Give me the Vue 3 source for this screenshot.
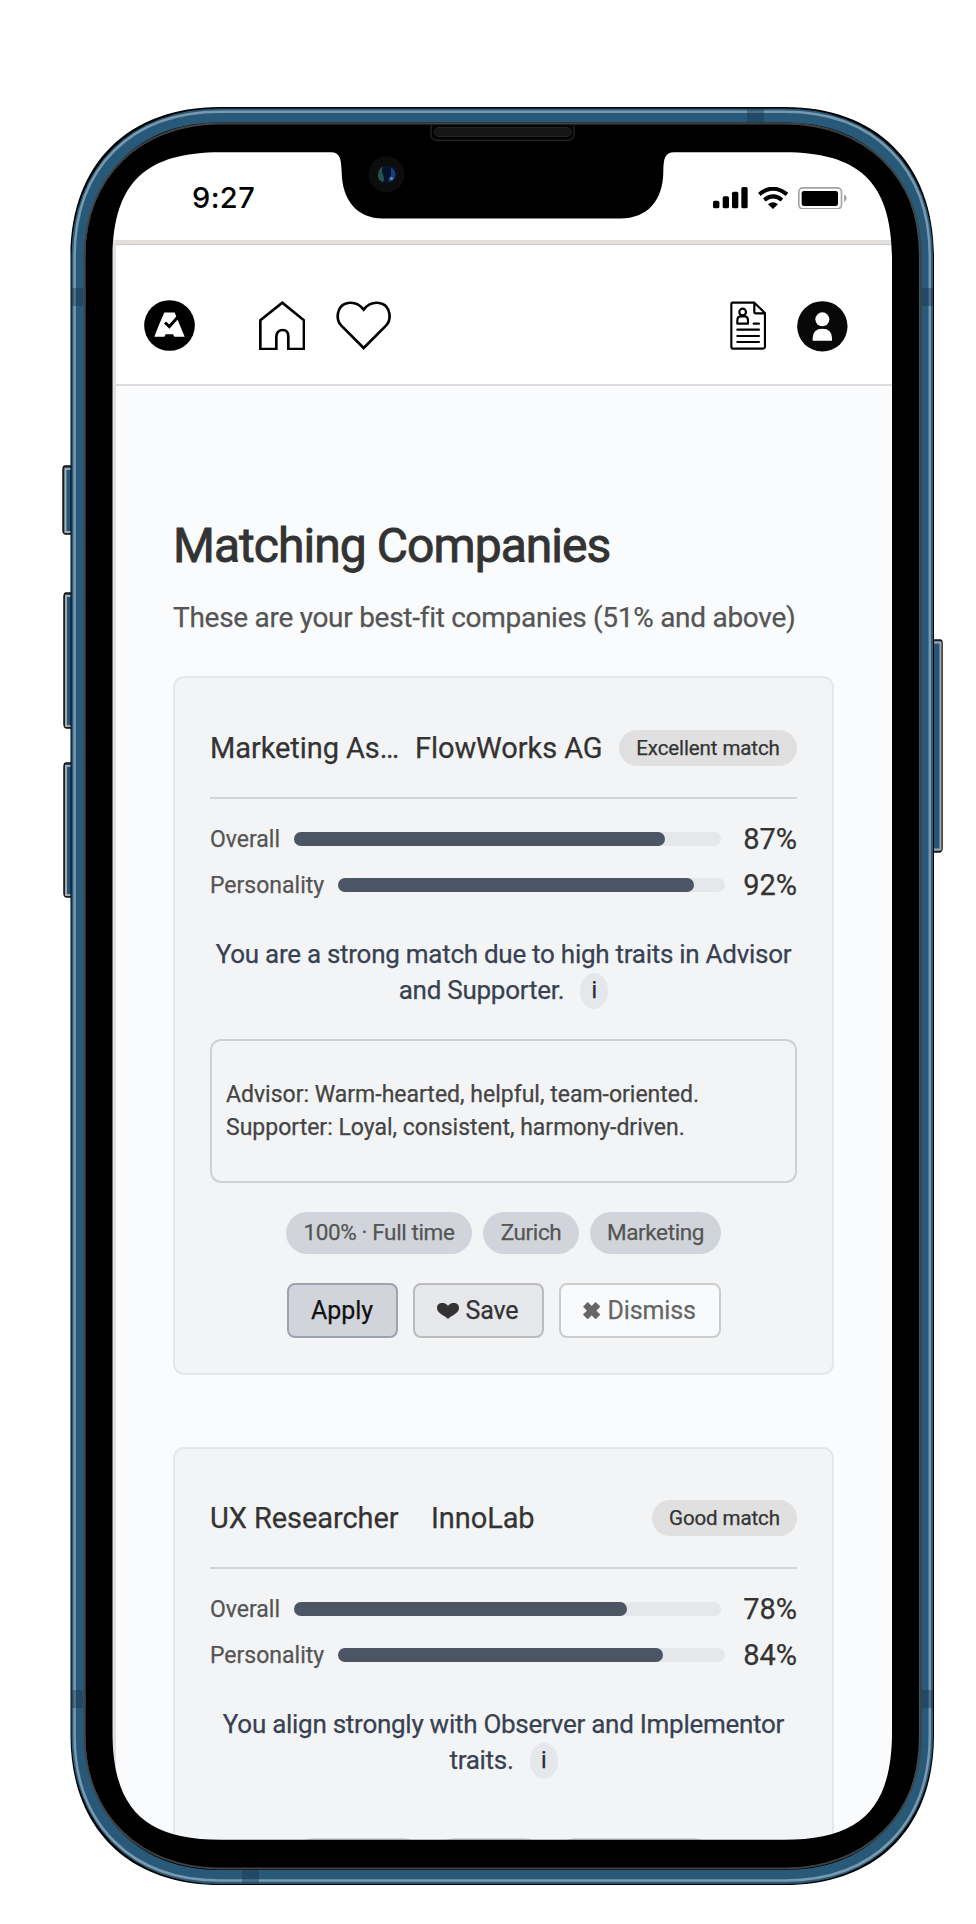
<script setup>
const matches = [
  {
    title: 'Marketing As…', company: 'FlowWorks AG', badge: 'Excellent match', kind: 'first',
    overall: 87, personality: 92,
    lines: ['You are a strong match due to high traits in Advisor', 'and Supporter.'],
    traits: [['Advisor:', 'Warm-hearted, helpful, team-oriented.'], ['Supporter:', 'Loyal, consistent, harmony-driven.']],
    tags: ['100% · Full time', 'Zurich', 'Marketing'],
  },
  {
    title: 'UX Researcher', company: 'InnoLab', badge: 'Good match', kind: 'second',
    overall: 78, personality: 84,
    lines: ['You align strongly with Observer and Implementor', 'traits.'],
    traits: [],
    tags: ['', '', ''],
  },
]
</script>

<template>
  <div class="stage">
    <main class="screen">
      <div class="status">
        <span class="time">9:27</span>
        <div class="signals">
          <svg class="cell" viewBox="642 293 104 64"><rect x="642" y="334" width="19" height="23" rx="5"/><rect x="671" y="321" width="19" height="36" rx="5"/><rect x="699" y="307" width="19" height="50" rx="5"/><rect x="727" y="293" width="19" height="64" rx="5"/></svg>
          <svg class="wifi" viewBox="776 291 91 66"><g fill="none" stroke="#000" stroke-width="12"><path d="M780 313Q821 279 863 313"/><path d="M795 330Q821 308 848 330"/></g><path d="M806 343Q821 331 836 343L821 357Z"/></svg>
          <svg class="battery" viewBox="897 291 147 68"><rect x="899.5" y="293.500" width="128" height="63" rx="12" fill="none" stroke="#a4a4a4" stroke-width="5"/><rect x="908" y="303" width="109" height="45" rx="7"/><path d="M1035 313Q1043 318 1043 325T1035 337Z" fill="#a4a4a4"/></svg>
        </div>
      </div>
      <div class="app">
        <header class="nav">
          <svg class="logo" viewBox="282 630 153 152"><circle cx="358.500" cy="706" r="76"/><path fill="#fff" d="M343 667H374L379 680L404 740H373L369 732H347L343 740H313L327 704Z"/><path d="M345 697L358 709L383 681" fill="none" stroke="#000" stroke-width="9"/></svg>
          <svg class="home" viewBox="627 634 139 148"><path d="M631 692L697 639L762 692V778H715V740Q715 721 698 721T679 740V778H631Z" fill="none" stroke="#000" stroke-width="8"/></svg>
          <svg class="heart" viewBox="860 634 166 146"><path d="M943 775L876 708C858 689 863 651 888 642C910 635 928 641 943 660C958 641 976 635 998 642C1023 651 1028 689 1010 708Z" fill="none" stroke="#000" stroke-width="8"/></svg>
          <svg class="doc" viewBox="689 634 109 147"><g fill="none" stroke="#000" stroke-width="6.500" stroke-linejoin="round" stroke-linecap="round"><path d="M697 639H762L794 670V771Q794 777 788 777H699Q693 777 693 771V643Q693 639 697 639ZM762 639V666Q762 671 767 671H794"/><circle cx="727" cy="667" r="10"/><path d="M711 702V693Q711 681 720 680H734Q743 681 743 693V702ZM760 702H776M711 720H776M711 739H776M711 757H776"/></g></svg>
          <svg class="avatar" viewBox="891 632 152 152"><circle cx="967" cy="708" r="75.500" fill="#080808"/><circle cx="967" cy="687" r="21" fill="#fff"/><path fill="#fff" d="M938 751V744Q938 715 967 715T996 744V751Z"/></svg>
        </header>
        <h1><span>Matching Companies</span></h1>
        <p class="lead"><span>These are your best-fit companies (51% and above)</span></p>

        <article v-for="m in matches" :key="m.title" class="card" :class="m.kind">
          <div class="head">
            <span class="title">{{ m.title }}</span>
            <span class="company">{{ m.company }}</span>
            <span class="badge">{{ m.badge }}</span>
          </div>
          <div class="score overall">
            <span class="label">Overall</span>
            <div class="track"><div class="fill" :style="{ width: m.overall + '%' }"></div></div>
            <span class="pct">{{ m.overall }}%</span>
          </div>
          <div class="score personality">
            <span class="label">Personality</span>
            <div class="track"><div class="fill" :style="{ width: m.personality + '%' }"></div></div>
            <span class="pct">{{ m.personality }}%</span>
          </div>
          <div class="reason">
            <div class="line"><span>{{ m.lines[0] }}</span></div>
            <div class="line"><span>{{ m.lines[1] }}</span><span class="info">i</span></div>
          </div>
          <div v-if="m.traits.length" class="traits">
            <div v-for="t in m.traits" :key="t[0]"><span>{{ t[0] }} {{ t[1] }}</span></div>
          </div>
          <div class="tags"><span v-for="(t, i) in m.tags" :key="i" class="tag">{{ t }}</span></div>
          <div v-if="m.traits.length" class="actions">
            <button class="apply">Apply</button>
            <button class="save"><svg class="love" viewBox="864 608 66 48"><path fill="#333" d="M897 656C885 643 864 640 864 622C864 605 888 603 897 617C906 603 930 605 930 622C930 640 909 643 897 656Z"/></svg>Save</button>
            <button class="dismiss"><svg class="cross" viewBox="131 605 52 52"><path d="M138 612L176 650M176 612L138 650" stroke="#666" stroke-width="20"/></svg>Dismiss</button>
          </div>
        </article>
      </div>
    </main>

    <svg class="shell" viewBox="0 0 976 1924">
      <g fill="#245577" stroke="#111" stroke-width="1.500">
        <path d="M72 466H65Q63 466 63 470V530Q63 534 66 534H72ZM72 593H66Q64 593 64 597V724Q64 728 67 728H72ZM72 763H66Q64 763 64 767V893Q64 897 67 897H72ZM933 640H940Q942 640 942 643V848Q942 852 939 852H933Z"/>
      </g>
      <path d="M71 469H65.500V532H71M71 596H66V726H71M71 766H66V895H71M934 642.500H940.500V849.500H934" fill="none" stroke="#aaa8aa" stroke-width="2"/>
      <path fill-rule="evenodd" fill="#000" d="M220 107H785C876 107 934 163 934 257V1735C934 1829 876 1885 785 1885H220C129 1885 70.500 1829 70.500 1735V257C70.500 163 129 107 220 107Z
        M221 152.300C145 152.300 112.500 183 112.500 260V1732C112.500 1809 145 1839.800 221 1839.800H784C860 1839.800 892 1809 892 1732V260C892 183 860 152.300 784 152.300H674C665 152.500 663.500 158 663.300 172C663 200 648 218.500 620 218.500H383C357 218.500 342 200 341.700 172C341 158 340 152.500 331 152.300Z"/>
      <path class="metal" d="M220 115.500H785C870 115.500 926 171 926 257V1735C926 1821 870 1877 785 1877H220C135 1877 78.500 1821 78.500 1735V257C78.500 171 135 115.500 220 115.500Z"/>
      <path class="shine" d="M220 111.800H785C873 111.800 929.800 167 929.800 257V1735C929.800 1825 873 1880.500 785 1880.500H220C132 1880.500 74.600 1825 74.600 1735V257C74.600 167 132 111.800 220 111.800Z"/>
      <path class="edge" d="M220 123.500H785C865 123.500 921 177 921 257V1735C921 1815 865 1868.500 785 1868.500H220C140 1868.500 84.500 1815 84.500 1735V257C84.500 177 140 123.500 220 123.500Z"/>
      <path d="M747 109H764V122H747ZM72 288H83V306H72ZM922 288H933V306H922ZM72 1690H83V1708H72ZM922 1690H933V1708H922ZM242 1870H259V1883H242Z" fill="#17334b" fill-opacity=".4"/>
      <path d="M431 125V134Q431 140.500 438 140.500H567Q574 140.500 574 134V125" fill="#050505" stroke="#242424" stroke-width="1.300"/>
      <rect x="434.500" y="127.500" width="136.500" height="9" rx="4.500" fill="#151515" stroke="#252525"/>
      <circle cx="386.500" cy="174.300" r="18" fill="#0d0d0d"/>
      <circle cx="386.500" cy="174.300" r="9" fill="#06122c"/>
      <path d="M383 166.500Q378 169 378 175T383 182Q385 179 383 175T383 166.500Z" fill="#28524f"/>
      <path d="M391 167Q395.500 170 395.500 175T389 182Q387 179 391 176Z" fill="#123f83"/>
      <circle cx="391.500" cy="178.500" r="1.700" fill="#5c8797"/>
    </svg>
  </div>
</template>

<style>
body { background: #fff; }
</style>
<style scoped>
* { box-sizing: border-box; }
.stage { position: relative; width: 976px; height: 1924px; padding: 152px 84px 0 112px; overflow: hidden; font-family: Roboto, "Liberation Sans", sans-serif; background: #fff; }
.screen { width: 780px; height: 1688px; overflow: hidden; border-radius: 65px; background: #e3e0de; }
.status { height: 88px; background: #fff; padding: 30px 45px 0 80px; display: flex; justify-content: space-between; font: 500 29px/32px Inter, sans-serif; }
.time { letter-spacing: .4px; }
.signals { display: flex; height: 32px; align-items: center; }
.cell { width: 34.700px; height: 21.300px; margin-right: 10px; }
.wifi { width: 30.300px; height: 22px; margin-right: 10px; }
.battery { width: 49px; height: 22.700px; }
.app { margin: 4px 0 0 3px; border-top: 1.500px solid #ccc; border-left: 1px solid #e0dfe4; background: #fafbfd; padding-bottom: 100px; -webkit-text-stroke: .25px currentColor; }
.nav { height: 141px; background: #fff; border-bottom: 2px solid #dcdcde; padding: 55px 44.500px 0 28px; display: flex; }
.logo { width: 51px; height: 51px; }
.home { width: 46.300px; height: 49.300px; margin: 1px 0 0 64px; }
.heart { width: 55.300px; height: 48.700px; margin: 1px 0 0 31px; }
.doc { width: 36.300px; height: 49px; margin: 1px 0 0 auto; }
.avatar { width: 50.700px; height: 50.700px; margin: 1px 0 0 31px; }
h1 { margin: 130px 0 0 57px; font-size: 48px; line-height: 60px; font-weight: 400; letter-spacing: -.95px; color: #333; white-space: nowrap; -webkit-text-stroke: .9px currentColor; }
.lead { margin: 26px 0 42px 57px; font-size: 28px; line-height: 32px; letter-spacing: -.28px; color: #555; white-space: nowrap; }
.card { width: 661px; height: 699px; margin: 0 0 72px 57px; padding: 53px 35px 0; border: 2px solid #e6e7ea; border-radius: 11px; background: #f3f4f6; }
.second { height: 698px; padding-top: 52px; }
.head { height: 68px; border-bottom: 2px solid #d1d5db; display: flex; white-space: nowrap; font-size: 29px; line-height: 35px; letter-spacing: -.08px; color: #333; }
.title { width: 205px; }
.second .title { width: 221px; }
.badge { width: 178px; height: 36px; border-radius: 18px; margin: -1px 0 0 auto; background: #e0e0e0; text-align: center; font-size: 20.500px; line-height: 36px; letter-spacing: -.1px; }
.second .badge { width: 145px; }
.score { height: 46px; display: flex; align-items: center; color: #555; font-size: 23px; }
.overall { margin-top: 17px; }
.label { width: 84px; }
.personality .label { width: 128px; }
.track { width: 427px; height: 14px; border-radius: 7px; background: #e5e7eb; }
.personality .track { width: 387px; }
.fill { height: 14px; border-radius: 7px; background: #4b5563; }
.pct { margin-left: auto; color: #333; font-size: 29px; }
.reason { margin-top: 28px; font-size: 26px; letter-spacing: -.27px; color: #374151; }
.line { height: 36px; display: flex; align-items: center; justify-content: center; white-space: nowrap; }
.info { width: 28px; height: 36px; margin: 2px 0 0 16px; border-radius: 14px / 18px; background: #e5e7eb; color: #1f2937; text-align: center; font-size: 23px; line-height: 36px; }
.traits { margin-top: 31px; height: 144px; padding: 37px 14px; border: 2px solid #cfd0d2; border-radius: 11px; color: #444; font-size: 23px; line-height: 33px; white-space: nowrap; }
.tags { margin-top: 29px; height: 42px; display: flex; justify-content: center; gap: 11px; color: #555; font-size: 22.500px; line-height: 41px; letter-spacing: -.38px; white-space: nowrap; }
.second .tags { margin-top: 60px; }
.tag { height: 42px; border-radius: 21px; background: #d1d5db; text-align: center; }
.first .tag:nth-child(1) { width: 186px; }
.first .tag:nth-child(2) { width: 96px; }
.first .tag:nth-child(3) { width: 131px; }
.second .tag:nth-child(1) { width: 130px; }
.second .tag:nth-child(2) { width: 110px; }
.second .tag:nth-child(3) { width: 159px; }
.actions { margin-top: 29px; display: flex; justify-content: center; gap: 15px; }
button { height: 55px; border-radius: 8px; border: 2px solid #bbb; padding: 0; display: flex; align-items: center; justify-content: center; font: 25px/30px Roboto, sans-serif; letter-spacing: -.1px; white-space: nowrap; -webkit-text-stroke: .25px currentColor; }
.apply { width: 111px; border-color: #9ca3af; background: #d1d5db; color: #111; }
.save { width: 131px; background: #e5e7eb; color: #333; }
.dismiss { width: 162px; border-color: #ccc; background: #f9fafb; color: #666; }
.love { width: 22px; height: 16px; margin-right: 6px; }
.cross { width: 17.300px; height: 17.300px; margin-right: 7px; }
.shell { position: absolute; left: 0; top: 0; width: 976px; height: 1924px; }
.metal { fill: none; stroke: #285979; stroke-width: 14; }
.shine { fill: none; stroke: #7899ae; stroke-width: 2.500; }
.edge { fill: none; stroke: #414141; stroke-width: 1.800; }
</style>
